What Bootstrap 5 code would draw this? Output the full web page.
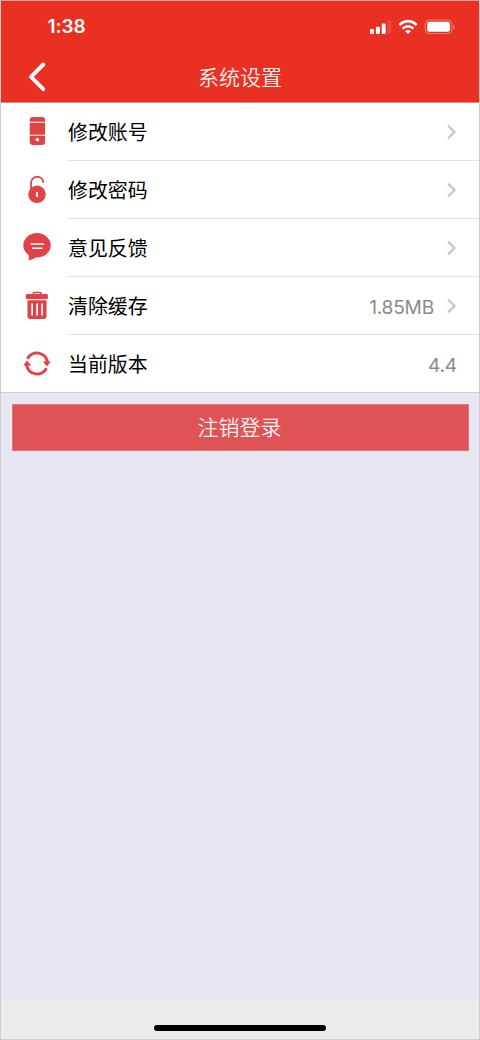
<!DOCTYPE html>
<html lang="zh-CN">
<head>
<meta charset="utf-8">
<meta name="viewport" content="width=device-width, initial-scale=1">
<title>系统设置</title>
<link href="https://cdn.jsdelivr.net/npm/bootstrap@5.3.0/dist/css/bootstrap.min.css" rel="stylesheet">
<style>
body{font-family:Inter,"Liberation Sans","Noto Sans CJK SC",sans-serif;background:#e8e6f1;color:#000}
.screen{height:1040px;border:1px solid #cfcdd0;border-top-color:#d9a09c}
.app-header{height:102px;background:#ea3022;color:#fff;border-bottom:1px solid #d98a82}
.status{height:51px;padding:0 24px 0 46.500px}
.clock{font-size:19px;font-weight:600;letter-spacing:-.1px;line-height:51px}
.title-bar{height:50px;grid-template-columns:72px 1fr 72px}
.title-text{font:350 21px/48px "Noto Sans CJK SC",sans-serif;color:#fff0ec}
.settings{--bs-list-group-border-color:transparent;background:#fff;border-bottom:1px solid #d3d2d8}
.setting{height:58px;padding-left:16px}
.setting:last-child{height:57px}
.setting-body{margin-left:11px;padding-right:22px;border-bottom:1px solid #e0e0e1}
.setting:last-child .setting-body{border-bottom:0}
.setting-label{font:400 19.9px/57px "Noto Sans CJK SC",sans-serif}
.setting-value{color:#8b8b8d;font-size:19.200px;letter-spacing:-.25px;padding-top:4px}
.chev{margin-left:12px}
.ico{fill:#df4345;stroke:none}
.logout,.logout:hover{margin:11px 10px 0 11px;height:47px;border:1px solid #e2777b;border-radius:0;background:#df5256;color:#fff0ec;font:350 21px/42px "Noto Sans CJK SC",sans-serif;padding:0 2px 3px 0}
.home-area{height:39px;background:#ebebeb}
.home-bar{width:172px;height:6px;background:#000;margin-bottom:8px}
</style>
</head>
<body>
<div class="screen d-flex flex-column">
  <header class="app-header">
    <div class="status d-flex justify-content-between align-items-center">
      <span class="clock">1:38</span>
      <svg width="86" height="20" viewBox="0 0 86 20" fill="#fff">
        <rect x="1" y="12" width="4" height="5" rx="1"/><rect x="6.900" y="9.700" width="4" height="7.300" rx="1"/><rect x="12.700" y="6.500" width="4" height="10.500" rx="1"/><rect x="18.300" y="3.500" width="4" height="13.500" rx="1" opacity=".12"/>
        <path d="M30.300 8Q39 .3 47.700 8M33.600 11.500Q39 7 44.400 11.500" fill="none" stroke="#fff" stroke-width="2.500"/><path d="M36.100 14.200Q39 12 41.900 14.200L39 17Z"/>
        <rect x="56.300" y="3" width="26.500" height="13.600" rx="4" fill="none" stroke="#fff" opacity=".4"/><rect x="58.200" y="4.800" width="22.800" height="10" rx="2.400"/><path d="M84.200 7.500v5q1.500-.8 1.500-2.500t-1.500-2.500" opacity=".4"/>
      </svg>
    </div>
    <div class="title-bar d-grid">
      <a href="#" aria-label="返回"><svg class="d-block" width="72" height="50" viewBox="0 0 72 50" fill="none" stroke="#fff" stroke-width="3.900" stroke-linecap="round" stroke-linejoin="round"><path d="M42.300 12.500 30 24.800 42.300 37.100"/></svg></a>
      <h1 class="title-text text-center m-0">系统设置</h1>
    </div>
  </header>

  <main class="flex-grow-1">
    <div class="settings list-group list-group-flush">
      <div class="setting d-flex">
        <svg class="ico flex-shrink-0" width="40" height="57" viewBox="0 0 40 57"><rect x="12.700" y="14" width="15.400" height="28" rx="3.200"/><path d="M12 19.300h17M12 32.300h17" stroke="#fff" stroke-width="1.100"/><circle cx="20.400" cy="36.800" r="1.800" fill="#fff"/></svg>
        <div class="setting-body d-flex flex-grow-1 align-items-center"><span class="setting-label me-auto">修改账号</span><svg class="chev" width="11" height="16" viewBox="0 0 11 16" fill="none" stroke="#c5c5c8" stroke-width="2.200"><path d="M2 1.500 8.500 8 2 14.500"/></svg></div>
      </div>
      <div class="setting d-flex">
        <svg class="ico flex-shrink-0" width="40" height="57" viewBox="0 0 40 57"><circle cx="20" cy="33.300" r="8.700"/><path d="M14.100 28.500V21.500a6.200 6.200 0 0 1 12.200-1v1.300" fill="none" stroke="#df4345" stroke-width="1.800"/><path d="M20 31v5" stroke="#fff" stroke-width="1.800"/></svg>
        <div class="setting-body d-flex flex-grow-1 align-items-center"><span class="setting-label me-auto">修改密码</span><svg class="chev" width="11" height="16" viewBox="0 0 11 16" fill="none" stroke="#c5c5c8" stroke-width="2.200"><path d="M2 1.500 8.500 8 2 14.500"/></svg></div>
      </div>
      <div class="setting d-flex">
        <svg class="ico flex-shrink-0" width="40" height="57" viewBox="0 0 40 57"><ellipse cx="20" cy="26.300" rx="13.700" ry="12.200"/><path d="M11 34q1.500 4 .5 7.600 4.500-.8 7.500-3.700z"/><path d="M13.500 25h13.500M15 29.300h10.500" stroke="#fff" stroke-width="1.500"/></svg>
        <div class="setting-body d-flex flex-grow-1 align-items-center"><span class="setting-label me-auto">意见反馈</span><svg class="chev" width="11" height="16" viewBox="0 0 11 16" fill="none" stroke="#c5c5c8" stroke-width="2.200"><path d="M2 1.500 8.500 8 2 14.500"/></svg></div>
      </div>
      <div class="setting d-flex">
        <svg class="ico flex-shrink-0" width="40" height="57" viewBox="0 0 40 57"><rect x="8.700" y="17" width="22.300" height="5" rx="1.500"/><path d="M16.500 17.500v-1.200q0-.8.8-.8h5.900q.8 0 .8.8v1.200" fill="none" stroke="#df4345" stroke-width="1.700"/><path d="M10.500 23.300h19v16q0 2.700-2.700 2.700H13.200q-2.700 0-2.700-2.700z"/><path d="M15.100 26.500v12M20.100 26.500v12M25 26.500v12" stroke="#fff" stroke-width="1.700"/></svg>
        <div class="setting-body d-flex flex-grow-1 align-items-center"><span class="setting-label me-auto">清除缓存</span><span class="setting-value">1.85MB</span><svg class="chev" width="11" height="16" viewBox="0 0 11 16" fill="none" stroke="#c5c5c8" stroke-width="2.200"><path d="M2 1.500 8.500 8 2 14.500"/></svg></div>
      </div>
      <div class="setting d-flex">
        <svg class="ico flex-shrink-0" width="40" height="57" viewBox="0 0 40 57"><path d="M10.500 23.700A10.600 10.600 0 0 1 30.400 27M29.500 33.300A10.600 10.600 0 0 1 9.600 30" fill="none" stroke="#df4345" stroke-width="3"/><path d="M25.600 26.500h8.200l-3.700 5zM6.200 30.500h8.200l-4.500-5z"/></svg>
        <div class="setting-body d-flex flex-grow-1 align-items-center"><span class="setting-label me-auto">当前版本</span><span class="setting-value">4.4</span></div>
      </div>
    </div>
    <div class="d-grid"><button class="logout btn" type="button">注销登录</button></div>
  </main>

  <footer class="home-area d-flex justify-content-center align-items-end"><div class="home-bar rounded-pill"></div></footer>
</div>
<script src="https://cdn.jsdelivr.net/npm/bootstrap@5.3.0/dist/js/bootstrap.bundle.min.js"></script>
</body>
</html>
